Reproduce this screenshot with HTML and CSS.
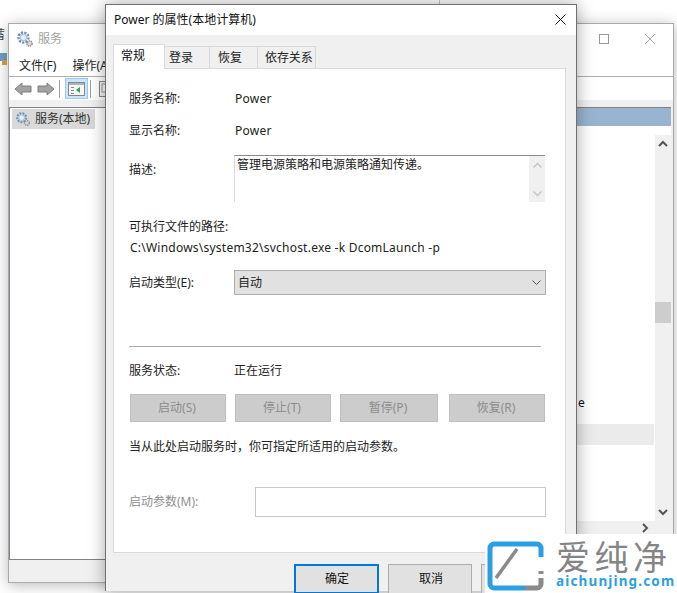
FILE: index.html
```html
<!DOCTYPE html>
<html lang="zh-CN">
<head>
<meta charset="utf-8">
<title>Power 的属性(本地计算机)</title>
<link rel="stylesheet" href="styles.css">
</head>
<body>
<div class="desk-line"></div>
<div class="desk-glyph">蓄</div>
<svg class="desk-icon" width="8" height="14" viewBox="0 0 8 14"><rect x="0" y="1" width="7" height="8" fill="#6f9fc8"/><rect x="2" y="8" width="5" height="5" fill="#d9a441"/></svg>

<section class="services">
  <header class="svc-title">
    <svg class="gear" width="18" height="18" viewBox="0 0 18 18"><use href="#gear"/></svg>
    <span>服务</span>
    <span class="svc-controls">
      <span class="max-box"></span>
      <svg width="12" height="12" viewBox="0 0 12 12"><path d="M1 1l10 10M11 1L1 11" stroke="#a8a8a8" fill="none"/></svg>
    </span>
  </header>
  <nav class="svc-menu"><span>文件(F)</span><span>操作(A)</span></nav>
  <div class="svc-tools">
    <svg width="18" height="14" viewBox="0 0 18 14"><path d="M1 7l7-6v3h9v6H8v3z" fill="#a3a3a3" stroke="#7d7d7d"/></svg>
    <svg width="18" height="14" viewBox="0 0 18 14"><path d="M17 7l-7-6v3H1v6h9v3z" fill="#a3a3a3" stroke="#7d7d7d"/></svg>
    <i class="tool-sep tool-sep-a"></i>
    <span class="tool-active">
      <svg width="17" height="14" viewBox="0 0 17 14"><rect x=".5" y=".5" width="16" height="13" fill="#f6f8f6" stroke="#7d8a94"/><rect x="1" y="1" width="15" height="2" fill="#aab4bd"/><rect x="3" y="5" width="3" height="1" fill="#8a8a8a"/><rect x="3" y="8" width="3" height="1" fill="#8a8a8a"/><rect x="3" y="11" width="3" height="1" fill="#8a8a8a"/><path d="M12 5v6L8 8z" fill="#3c9a52"/></svg>
    </span>
    <i class="tool-sep tool-sep-b"></i>
    <svg class="tool-last" width="16" height="16" viewBox="0 0 16 16"><rect x=".5" y=".5" width="15" height="15" fill="#f4f4f4" stroke="#8a8a8a"/><rect x="3" y="3" width="6" height="8" fill="#fff" stroke="#9a9a9a"/></svg>
  </div>
  <div class="svc-body">
    <aside class="svc-tree">
      <div class="tree-item">
        <svg width="16" height="16" viewBox="0 0 18 18"><use href="#gear"/></svg>
        <span>服务(本地)</span>
      </div>
    </aside>
    <div class="svc-list">
      <div class="list-head"></div>
      <div class="list-main">
        <div class="list-rows">
          <div class="row-text">e</div>
          <div class="row-grey"></div>
        </div>
        <div class="vscroll">
          <svg width="10" height="8" viewBox="0 0 10 8"><path d="M1 6l4-4 4 4" stroke="#555" stroke-width="2" fill="none"/></svg>
          <span class="thumb"></span>
          <svg width="10" height="8" viewBox="0 0 10 8"><path d="M1 2l4 4 4-4" stroke="#555" stroke-width="2" fill="none"/></svg>
        </div>
      </div>
      <div class="hscroll">
        <svg width="8" height="10" viewBox="0 0 8 10"><path d="M2 1l4 4-4 4" stroke="#555" stroke-width="2" fill="none"/></svg>
      </div>
    </div>
  </div>
  <footer class="svc-status"></footer>
</section>

<section class="dialog">
  <header class="dlg-title">
    <span>Power 的属性(本地计算机)</span>
    <svg class="dlg-close" width="11" height="11" viewBox="0 0 11 11"><path d="M.5.5l10 10M10.5.5l-10 10" stroke="#111" fill="none"/></svg>
  </header>
  <div class="dlg-body">
    <div class="tabs">
      <span class="tab tab-on">常规</span>
      <span class="tab">登录</span>
      <span class="tab">恢复</span>
      <span class="tab">依存关系</span>
    </div>
    <div class="panel">
      <div class="line line-name"><label>服务名称:</label><span class="latin">Power</span></div>
      <div class="line line-show"><label>显示名称:</label><span class="latin">Power</span></div>
      <div class="line line-desc">
        <label>描述:</label>
        <div class="desc-box">
          <span class="desc-text">管理电源策略和电源策略通知传递。</span>
          <div class="desc-scroll">
            <svg width="9" height="8" viewBox="0 0 9 8"><path d="M.5 6.5l4-4 4 4" stroke="#c4c4c4" stroke-width="1.5" fill="none"/></svg>
            <svg width="9" height="8" viewBox="0 0 9 8"><path d="M.5 1.5l4 4 4-4" stroke="#c4c4c4" stroke-width="1.5" fill="none"/></svg>
          </div>
        </div>
      </div>
      <div class="path-label">可执行文件的路径:</div>
      <div class="path-value latin">C:\Windows\system32\svchost.exe -k DcomLaunch -p</div>
      <div class="line line-type">
        <label>启动类型(E):</label>
        <div class="select">
          <span>自动</span>
          <svg width="9" height="5" viewBox="0 0 9 5"><path d="M.5.5l4 4 4-4" stroke="#555" fill="none"/></svg>
        </div>
      </div>
      <hr class="rule">
      <div class="line line-state"><label>服务状态:</label><span>正在运行</span></div>
      <div class="actions">
        <span class="btn btn-a">启动(S)</span>
        <span class="btn btn-a">停止(T)</span>
        <span class="btn btn-b">暂停(P)</span>
        <span class="btn btn-c">恢复(R)</span>
      </div>
      <p class="hint">当从此处启动服务时，你可指定所适用的启动参数。</p>
      <div class="line line-param">
        <label>启动参数(M):</label>
        <div class="param-box"></div>
      </div>
    </div>
    <div class="dlg-foot">
      <span class="foot-btn foot-ok">确定</span>
      <span class="foot-btn foot-cancel">取消</span>
      <span class="foot-btn"></span>
    </div>
  </div>
</section>

<aside class="mark">
  <svg class="mark-logo" width="58" height="50" viewBox="0 0 58 50">
    <path d="M54 16V7a4 4 0 0 0-4-4H7a4 4 0 0 0-4 4v36a4 4 0 0 0 4 4h31" fill="none" stroke="#2a9fe4" stroke-width="5"/>
    <path d="M9 37L30 8" stroke="#8a8a8a" stroke-width="3.5" fill="none"/>
    <path d="M38 47h12a4 4 0 0 0 4-4V27" stroke="#8a8a8a" stroke-width="5" fill="none" stroke-dasharray="24 4 3 30"/>
  </svg>
  <div class="mark-text">
    <div class="mark-cn">爱纯净</div>
    <div class="mark-en">aichunjing.com</div>
  </div>
</aside>

<svg class="defs" width="0" height="0">
  <defs>
    <g id="gear">
      <circle cx="7.5" cy="7.5" r="5" fill="none" stroke="#6d93b5" stroke-width="2.4" stroke-dasharray="2.2 1.2"/>
      <circle cx="7.5" cy="7.5" r="3.2" fill="#e6eef5" stroke="#9db6cc"/>
      <circle cx="13.5" cy="13.5" r="2.6" fill="#d8d8d8" stroke="#8a8a8a" stroke-width="1.4" stroke-dasharray="1.4 .8"/>
    </g>
  </defs>
</svg>
</body>
</html>
```

FILE: styles.css
```css
* { box-sizing: border-box; }
html, body { margin: 0; padding: 0; }
body {
  position: relative;
  width: 677px;
  height: 593px;
  overflow: hidden;
  background: #fff;
  font: 12px/16px "Noto Sans", "Noto Sans CJK SC", sans-serif;
  color: #1a1a1a;
}
.defs { position: absolute; }
.latin { letter-spacing: .23px; }
.desk-line { position: absolute; left: 439px; top: 0; width: 1px; height: 5px; background: #c8c8c8; }
.desk-glyph { position: absolute; left: -7px; top: 27px; font-size: 12px; color: #444; }
.desk-icon { position: absolute; left: 0; top: 52px; }

/* background window */
.services {
  position: absolute;
  left: 8px;
  top: 23px;
  width: 666px;
  height: 560px;
  display: flex;
  flex-direction: column;
  background: #fff;
  border: 1px solid #a9a9a9;
  box-shadow: 0 2px 14px rgba(0,0,0,.28);
}
.svc-title { height: 23px; display: flex; align-items: center; padding-left: 7px; gap: 4px; color: #a3a3a3; padding-top: 6px; }
.svc-controls { margin-left: auto; display: flex; align-items: center; gap: 35px; padding-right: 17px; }
.max-box { width: 10px; height: 10px; border: 1px solid #999; }
.svc-menu { height: 30px; display: flex; gap: 16px; align-items: center; padding: 8px 0 0 10px; border-bottom: 1px solid #aeaeae; color: #222; }
.svc-tools { height: 23px; display: flex; align-items: center; gap: 5px; padding-left: 5px; }
.tool-sep { width: 1px; height: 18px; background: #a0a0a0; }
.tool-sep-a { margin-left: -1px; }
.tool-sep-b { margin-left: -3px; }
.tool-last { margin-left: 3px; }
.tool-active { width: 23px; height: 21px; display: flex; align-items: center; justify-content: center; background: #cce4f7; border: 1px solid #9cc9ec; }
.svc-body { flex: 1; display: flex; min-height: 0; background: #f0f0f0; padding: 7px 2px 0 0; }
.svc-tree { width: 560px; background: #fff; border-left: 1px solid #80808f; border-top: 1px solid #80808f; padding: 1px 0 0 2px; }
.tree-item { width: 83px; height: 20px; display: flex; align-items: center; gap: 4px; padding-left: 3px; background: #d9d9d9; color: #333; }
.svc-list { flex: 1; display: flex; flex-direction: column; }
.list-head { height: 19px; background: #99b4d1; border-top: 1px solid #808080; flex: none; }
.list-main { flex: 1; display: flex; min-height: 0; background: #fff; }
.list-rows { flex: 1; display: flex; flex-direction: column; }
.row-text { margin: 269px 0 0 9px; font-size: 12px; color: #111; }
.row-grey { height: 21px; margin: 13px 1px 0 0; background: #ebebeb; }
.vscroll { width: 16px; margin-top: 9px; display: flex; flex-direction: column; align-items: center; justify-content: space-between; padding: 5px 0; background: #f0f0f0; position: relative; }
.thumb { position: absolute; left: 0; top: 167px; width: 16px; height: 21px; background: #cdcdcd; }
.hscroll { height: 13px; flex: none; display: flex; justify-content: flex-end; align-items: center; padding-right: 22px; background: #f0f0f0; margin-bottom: 25px; }
.svc-status { height: 23px; flex: none; background: #f0f0f0; border-top: 1px solid #80808f; }

/* dialog */
.dialog {
  position: absolute;
  left: 105px;
  top: 4px;
  width: 472px;
  height: 587px;
  display: flex;
  flex-direction: column;
  background: #f0f0f0;
  border: 1px solid #707070;
  border-bottom: 0;
  box-shadow: 0 0 16px rgba(0,0,0,.35);
}
.dlg-title { height: 30px; flex: none; display: flex; justify-content: space-between; align-items: center; padding: 0 10px 0 8px; background: #fff; color: #111; }
.dlg-close { margin-top: -2px; }
.dlg-body { flex: 1; display: flex; flex-direction: column; padding: 9px 10px 0 7px; }
.tabs { display: flex; height: 25px; align-items: flex-end; position: relative; z-index: 1; margin-bottom: -1px; }
.tab { height: 23px; padding: 3px 6px 0 4px; border: 1px solid #d9d9d9; border-left: 0; border-bottom: 1px solid #d9d9d9; color: #222; }
.tab-on { height: 25px; width: 52px; padding: 3px 7px 0; background: #fff; border-left: 1px solid #d9d9d9; border-bottom: 0; color: #111; }
.tab:nth-child(2) { width: 45px; }
.tab:nth-child(3) { width: 48px; padding-left: 8px; }
.tab:nth-child(4) { width: 58px; padding-left: 7px; white-space: nowrap; letter-spacing: -.1px; }
.panel { height: 485px; flex: none; background: #fff; border: 1px solid #d9d9d9; padding: 0 0 0 15px; display: flex; flex-direction: column; color: #222; }
.line { display: flex; align-items: center; }
.line label { width: 105px; flex: none; }
.line-name { margin-top: 22px; }
.line-name .latin, .line-show .latin { margin-left: 1px; }
.line-show { margin-top: 16px; }
.line-desc { margin-top: 16px; height: 47px; align-items: flex-start; }
.line-desc label { margin-top: 7px; }
.desc-box { width: 311px; height: 47px; display: flex; justify-content: space-between; background: #fff; border-top: 1px solid #8a8a8a; border-left: 1px solid #d9d9d9; padding-left: 2px; }
.desc-text { padding-top: 1px; }
.desc-scroll { width: 16px; display: flex; flex-direction: column; justify-content: space-between; align-items: center; padding: 5px 0 4px; background: #f0f0f0; }
.path-label { margin-top: 17px; }
.path-value { margin: 5px 0 0 1px; }
.line-type { margin-top: 14px; }
.select { width: 312px; height: 25px; display: flex; align-items: center; justify-content: space-between; padding: 0 4px 0 3px; background: #e1e1e1; border: 1px solid #adadad; }
.rule { width: 412px; height: 1px; margin: 51px 0 0 0; border: 0; background: #a9a9a9; }
.line-state { margin-top: 16px; }
.actions { display: flex; margin: 15px 0 0 1px; }
.btn { height: 28px; display: flex; align-items: center; justify-content: center; padding-right: 2px; background: #cccccc; border: 1px solid #bfbfbf; color: #8c8c8c; }
.btn-a { width: 96px; margin-right: 9px; }
.btn-b { width: 98px; margin-right: 11px; }
.btn-c { width: 96px; }
.hint { margin: 17px 0 0; }
.line-param { margin-top: 32px; }
.line-param label { width: 126px; color: #8f8f8f; }
.param-box { width: 291px; height: 30px; background: #fff; border: 1px solid #c8c8c8; }
.dlg-foot { display: flex; padding: 11px 0 0 181px; gap: 9px; }
.foot-btn { width: 86px; height: 30px; display: flex; align-items: center; justify-content: center; background: #e1e1e1; border: 1px solid #adadad; color: #111; }
.foot-ok { border: 2px solid #0078d7; padding-left: 1px; }
.foot-cancel { width: 85px; padding-left: 2px; }

/* watermark */
.mark { position: absolute; left: 485px; top: 534px; width: 192px; height: 59px; display: flex; background: #fff; padding: 5px 0 0 2px; gap: 11px; }
.mark-logo { flex: none; margin-top: 2px; }
.mark-text { display: flex; flex-direction: column; }
.mark-cn { font: 400 34px/34px "Noto Sans CJK SC", sans-serif; color: #858585; letter-spacing: 4.5px; white-space: nowrap; }
.mark-en { font: bold 13.5px/16px "Noto Sans", sans-serif; color: #2a9fe4; letter-spacing: 1.15px; white-space: nowrap; }
```
